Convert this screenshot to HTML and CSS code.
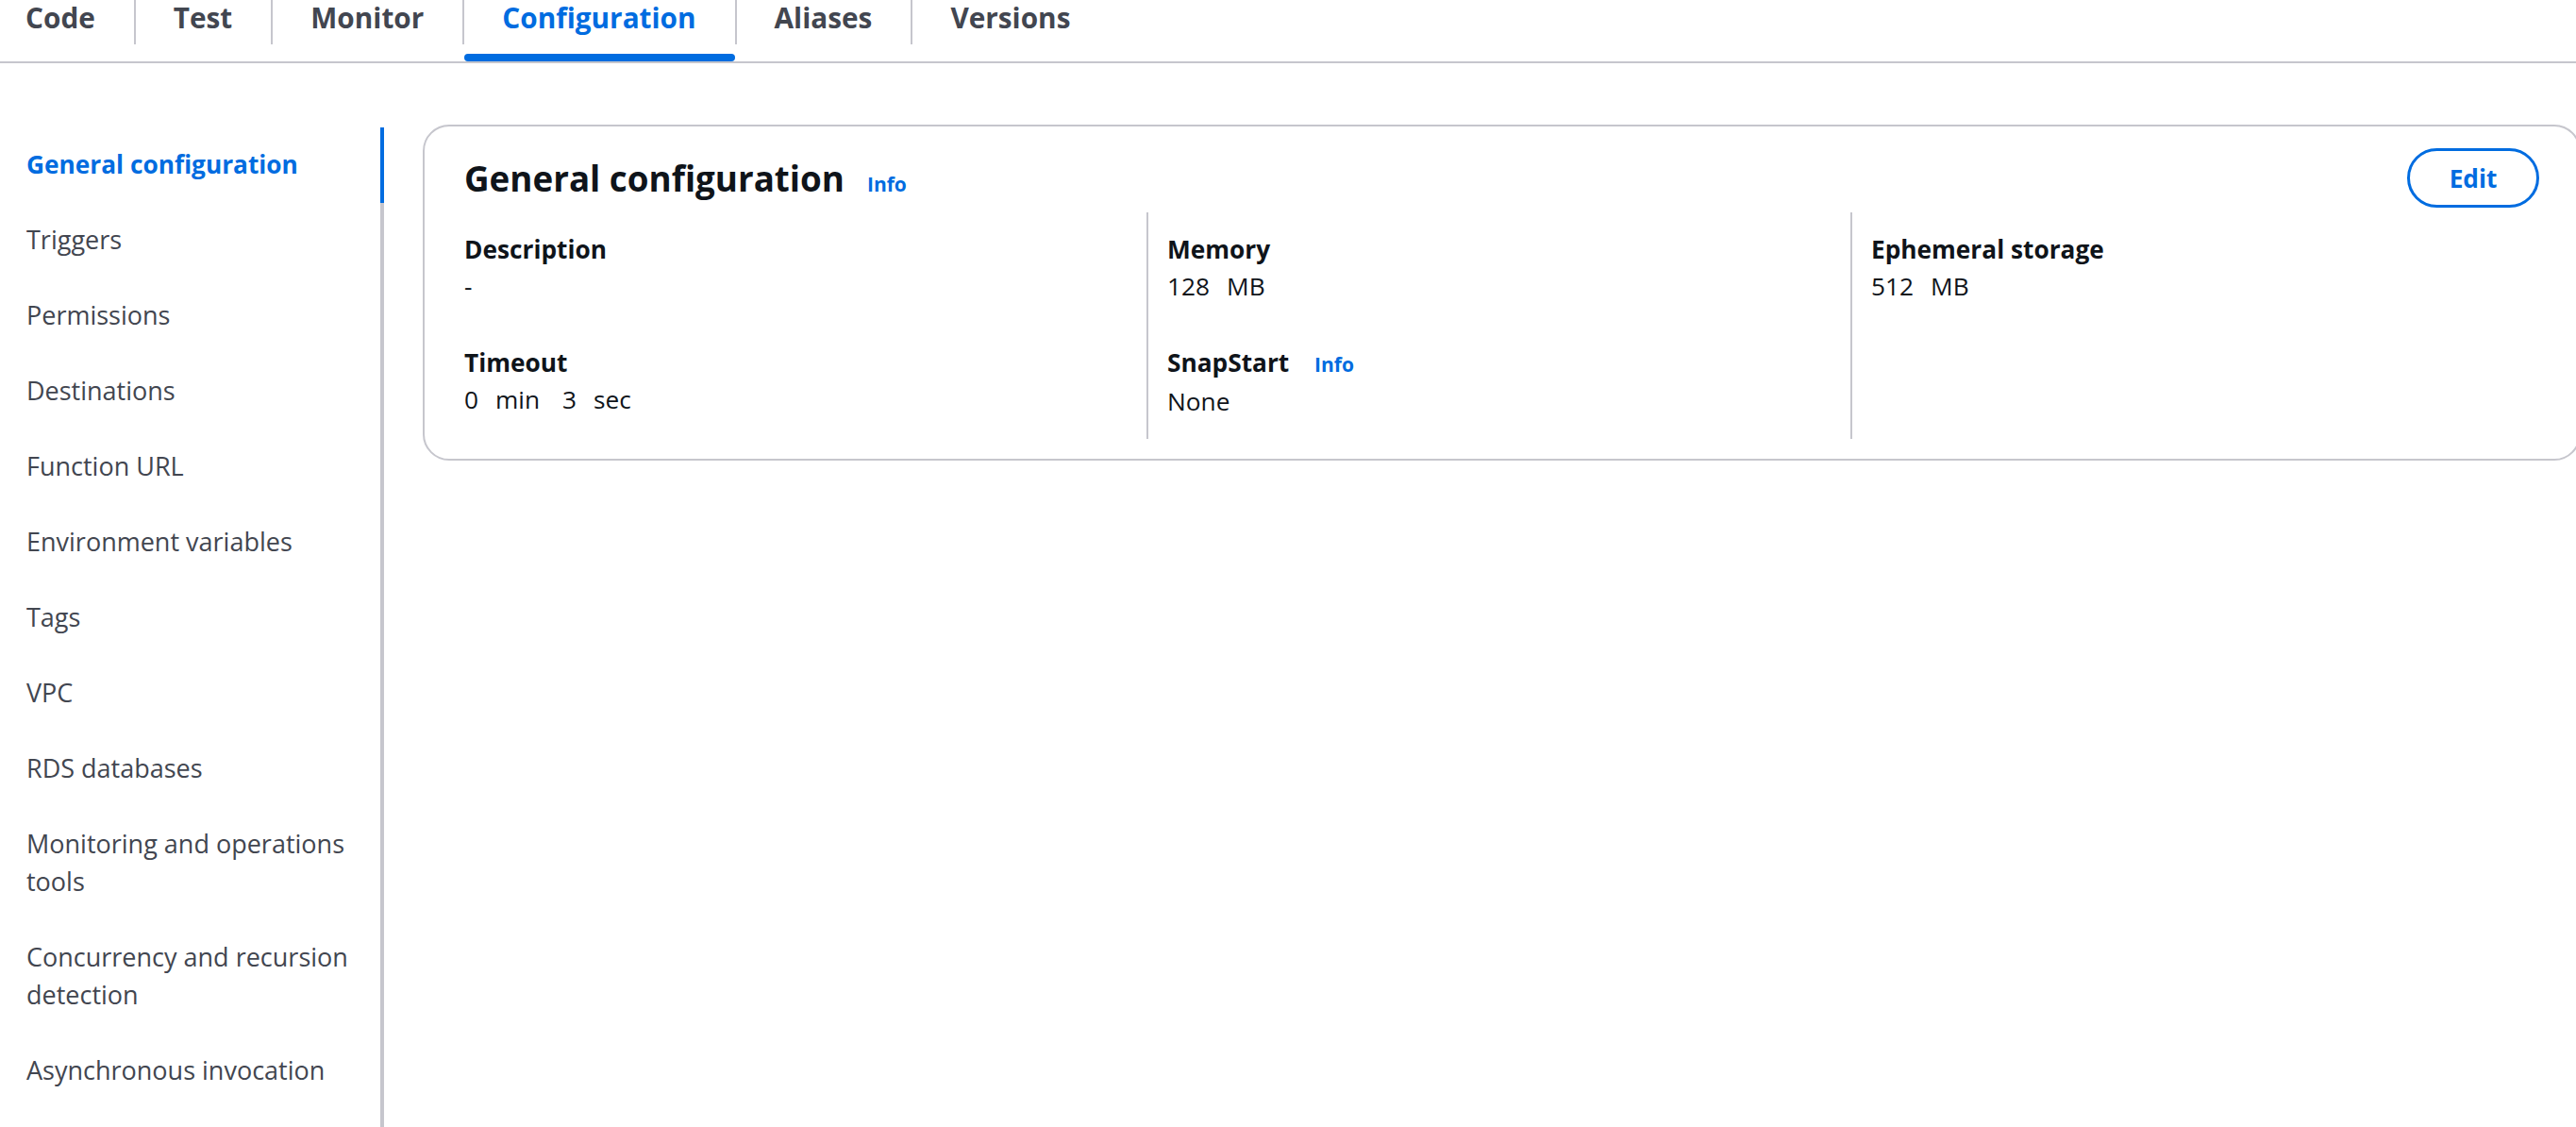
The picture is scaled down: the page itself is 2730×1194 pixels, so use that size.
FILE: index.html
```html
<!DOCTYPE html>
<html lang="en">
<head>
<meta charset="utf-8">
<title>Configuration</title>
<link rel="stylesheet" href="styles.css">
</head>
<body>
<nav class="tabs">
  <div class="tab first"><span class="tab-label">Code</span><span class="tab-indicator"></span></div>
  <div class="tab"><span class="tab-label">Test</span><span class="tab-indicator"></span></div>
  <div class="tab"><span class="tab-label">Monitor</span><span class="tab-indicator"></span></div>
  <div class="tab active"><span class="tab-label">Configuration</span><span class="tab-indicator"></span></div>
  <div class="tab"><span class="tab-label">Aliases</span><span class="tab-indicator"></span></div>
  <div class="tab"><span class="tab-label">Versions</span><span class="tab-indicator"></span></div>
</nav>
<div class="main">
  <aside class="side">
    <ul class="side-list">
      <li class="side-item active">General configuration</li>
      <li class="side-item">Triggers</li>
      <li class="side-item">Permissions</li>
      <li class="side-item">Destinations</li>
      <li class="side-item">Function URL</li>
      <li class="side-item">Environment variables</li>
      <li class="side-item">Tags</li>
      <li class="side-item">VPC</li>
      <li class="side-item">RDS databases</li>
      <li class="side-item">Monitoring and operations tools</li>
      <li class="side-item">Concurrency and recursion detection</li>
      <li class="side-item">Asynchronous invocation</li>
    </ul>
  </aside>
  <section class="card">
    <header class="card-header">
      <div class="card-title">
        <h2 class="heading">General configuration</h2>
        <a class="info">Info</a>
      </div>
      <button class="btn">Edit</button>
    </header>
    <div class="columns">
      <div class="col">
        <div class="kv">
          <div class="kv-label">Description</div>
          <div class="kv-value">-</div>
        </div>
        <div class="kv">
          <div class="kv-label">Timeout</div>
          <div class="kv-value"><span class="num">0</span><span class="unit">min</span><span class="num">3</span><span class="unit">sec</span></div>
        </div>
      </div>
      <div class="col divided">
        <div class="kv">
          <div class="kv-label">Memory</div>
          <div class="kv-value"><span class="num">128</span><span class="unit">MB</span></div>
        </div>
        <div class="kv">
          <div class="kv-label">SnapStart <a class="info small">Info</a></div>
          <div class="kv-value">None</div>
        </div>
      </div>
      <div class="col divided">
        <div class="kv">
          <div class="kv-label">Ephemeral storage</div>
          <div class="kv-value"><span class="num">512</span><span class="unit">MB</span></div>
        </div>
      </div>
    </div>
  </section>
</div>
</body>
</html>
```
FILE: styles.css
```css
html {
  overflow: hidden;
}

body {
  margin: 0;
  min-height: 100vh;
  display: flex;
  flex-direction: column;
  font-family: "Open Sans", "Noto Sans", "Liberation Sans", sans-serif;
  color: #0f141a;
  background: #ffffff;
}

/* Tabs */
.tabs {
  display: flex;
  border-bottom: 2px solid #c6c6cd;
}

.tab {
  display: flex;
  flex-direction: column;
}

.tab-label {
  display: block;
  box-sizing: border-box;
  height: 47px;
  padding: 0 41px 9px 40px;
  border-left: 2px solid #c6c6cd;
  font-size: 29.75px;
  line-height: 38px;
  font-weight: 700;
  color: #424650;
  white-space: nowrap;
}

.tab.first .tab-label {
  border-left: none;
  padding-left: 27px;
}

.tab-indicator {
  display: block;
  height: 8px;
  margin: 10px 0 0 2px;
  border-radius: 4px;
}

.tab.active .tab-label {
  color: #006ce0;
}

.tab.active .tab-indicator {
  background: #006ce0;
}

/* Main area */
.main {
  flex: 1;
  display: flex;
  align-items: stretch;
  padding-top: 65px;
}

.side {
  display: flex;
  flex-direction: column;
  flex: none;
  width: 407px;
}

.side-list {
  flex: 1;
  list-style: none;
  margin: 3px 0 0 0;
  padding: 0 12px 0 28px;
  border-right: 4px solid #c6c6cd;
}

.side-item {
  padding: 19px 0 21px 0;
  font-size: 27px;
  line-height: 40px;
  color: #424650;
}

.side-item.active {
  color: #006ce0;
  font-size: 26.25px;
  font-weight: 700;
  margin-right: -16px;
  padding-right: 12px;
  border-right: 4px solid #006ce0;
}

/* Card */
.card {
  flex: 1;
  align-self: flex-start;
  margin: 0 -5px 0 41px;
  padding: 23px 42px 21px 42px;
  border: 2px solid #c6c6cd;
  border-radius: 28px;
}

.card-header {
  display: flex;
  align-items: center;
  justify-content: space-between;
}

.card-title {
  display: flex;
  align-items: baseline;
}

.heading {
  margin: 0;
  font-size: 36.75px;
  line-height: 44px;
  font-weight: 700;
  color: #0f141a;
}

.info {
  margin-left: 24px;
  font-size: 21px;
  font-weight: 700;
  color: #006ce0;
  cursor: pointer;
}

.info.small {
  margin-left: 20px;
}

.btn {
  box-sizing: border-box;
  width: 140px;
  height: 63px;
  border: 3.5px solid #006ce0;
  border-radius: 32px;
  background: #ffffff;
  color: #006ce0;
  font-family: inherit;
  font-size: 26.25px;
  font-weight: 700;
  padding: 0;
}

.columns {
  display: grid;
  grid-template-columns: 744px 746px 1fr;
  margin: 5px 0 0 -21px;
}

.col {
  padding: 20px 20px 20px 21px;
}

.col.divided {
  border-left: 2px solid #c6c6cd;
  padding-left: 20px;
}

.kv + .kv {
  margin-top: 42px;
}

.kv-label {
  font-size: 26.25px;
  line-height: 39px;
  font-weight: 700;
  color: #0f141a;
}

.kv-value {
  font-size: 26.25px;
  line-height: 39px;
  color: #0f141a;
}

.num {
  margin-right: 18px;
}

.unit {
  margin-right: 24px;
}
```
